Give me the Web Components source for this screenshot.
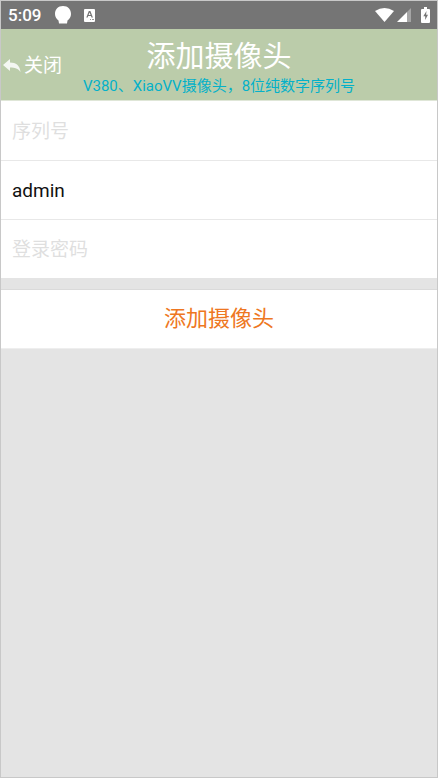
<!DOCTYPE html>
<html lang="zh-CN">
<head>
<meta charset="utf-8">
<meta name="viewport" content="width=device-width, initial-scale=1">
<title>添加摄像头</title>
<style>
  html, body { height: 100%; margin: 0; }
  body { font-family: Roboto, "Noto Sans CJK SC", sans-serif; background: #e4e4e4; }
</style>
</head>
<body>
<camera-app>
  <status-bar time="5:09"></status-bar>
  <title-bar>
    <span slot="back">关闭</span>
    <span slot="title">添加摄像头</span>
    <span slot="note">V380、XiaoVV摄像头，8位纯数字序列号</span>
  </title-bar>
  <camera-form></camera-form>
</camera-app>

<script>
const define = (name, markup, setup) => customElements.define(name, class extends HTMLElement {
  constructor() {
    super();
    this.attachShadow({ mode: "open" }).innerHTML = markup;
  }
  connectedCallback() { if (setup) setup(this, this.shadowRoot); }
});

define("camera-app", `
  <style>
    :host { display: flex; flex-direction: column; box-sizing: border-box; min-height: 100%; border: 1px solid #c8c8c8; background: #e4e4e4; }
  </style>
  <slot></slot>`);

define("status-bar", `
  <style>
    :host { display: flex; align-items: center; height: 28px; padding: 0 7px; background: #757575; color: #fff; }
    time { font-size: 17px; line-height: 28px; font-weight: 500; margin-right: 13px; }
    svg { display: block; fill: #fff; }
    .note { margin-left: 12px; }
    .system { display: flex; align-items: center; gap: 3px; margin-left: auto; }
    .battery { margin-left: 7px; }
  </style>
  <time></time>
  <svg width="18" height="20" viewBox="0 0 18 20"><path d="M9 1C4 1 1 4.500 1 9c0 3 1.500 5 3.500 6.500L5 18.500h8l.5-3C15.500 14 17 12 17 9c0-4.500-3-8-8-8z"/></svg>
  <svg class="note" width="12" height="14" viewBox="0 0 12 14"><path fill-rule="evenodd" d="M1 1h9q1 0 1 1v11q0 1-1 1H1q-1 0-1-1V2q0-1 1-1zM4.800 3 2.300 9.500h1.400L4.200 8H7l.5 1.500h1.400L6.400 3zM5.600 4.600 6.600 7h-2zM6 11.200v.8h1v-.8zM8 11.200v.8h2v-.8z"/></svg>
  <span class="system">
    <svg width="19" height="16" viewBox="0 0 19 16"><path d="M0 4Q9.500-2 19 4L9.500 15z"/></svg>
    <svg width="14" height="14" viewBox="0 0 14 14"><path d="M14 0v14h-4V4z" opacity=".35"/><path d="M10 4v10H0z"/></svg>
    <svg class="battery" width="9" height="16" viewBox="0 0 9 16"><path fill-rule="evenodd" d="M3 0h3v2h2q1 0 1 1v12q0 1-1 1H1q-1 0-1-1V3q0-1 1-1h2zM5.500 4 2.300 9.200h1.900V13L7 7.800H5.100z"/></svg>
  </span>`,
  (host, root) => { root.querySelector("time").textContent = host.getAttribute("time"); });

define("title-bar", `
  <style>
    :host { display: grid; grid-template-columns: minmax(0, 1fr) auto minmax(0, 1fr); align-items: center; height: 71px; background: #bbccaa; border-bottom: 1px solid #dfe6d7; color: #fff; }
    button { display: flex; align-items: center; gap: 3px; justify-self: start; border: 0; padding: 2px 0 0 2px; margin: 0; background: none; color: inherit; font: inherit; font-size: 19px; line-height: 28px; white-space: nowrap; }
    svg { display: block; flex: none; fill: #f4f7f2; }
    .heading { text-align: center; white-space: nowrap; }
    h1 { margin: 0; font-size: 29px; line-height: 42px; font-weight: 400; padding-top: 1px; }
    p { margin: 0; font-size: 15px; line-height: 16px; color: #04b1c9; }
  </style>
  <button type="button">
    <svg width="18" height="14" viewBox="0 0 18 14"><path d="M0 6 7 0v3.500c6 0 10 3 10.500 9.500C15 9.500 12 8.500 7 8.500V12z"/></svg>
    <slot name="back"></slot>
  </button>
  <div class="heading">
    <h1><slot name="title"></slot></h1>
    <p><slot name="note"></slot></p>
  </div>`);

define("text-field", `
  <style>
    :host { display: block; background: #fff; }
    :host(:not([last])) { border-bottom: 1px solid #e8e8e8; }
    input { display: block; box-sizing: border-box; width: 100%; height: 58px; border: 0; outline: 0; padding: 0 11px; margin: 0; background: none; font: inherit; font-size: 19px; color: #111; }
    input::placeholder { color: #dfdfdf; opacity: 1; }
  </style>
  <input>`,
  (host, root) => {
    const input = root.querySelector("input");
    input.type = host.getAttribute("type") || "text";
    input.placeholder = host.getAttribute("label");
    input.setAttribute("aria-label", host.getAttribute("label"));
    input.value = host.getAttribute("value") || "";
  });

define("camera-form", `
  <style>
    :host { display: block; }
    form { margin: 0; }
    text-field:first-child { border-top: 1px solid #fff; }
    button { display: block; width: 100%; height: 60px; margin: 11px 0 0; padding: 0; border: 0; border-top: 1px solid #dadada; border-bottom: 1px solid #eee; background: #fff; font: inherit; font-size: 22px; line-height: 58px; color: #ee7722; }
  </style>
  <form>
    <text-field label="序列号"></text-field>
    <text-field label="用户名" value="admin"></text-field>
    <text-field label="登录密码" type="password" last></text-field>
    <button type="button">添加摄像头</button>
  </form>`);
</script>
</body>
</html>
